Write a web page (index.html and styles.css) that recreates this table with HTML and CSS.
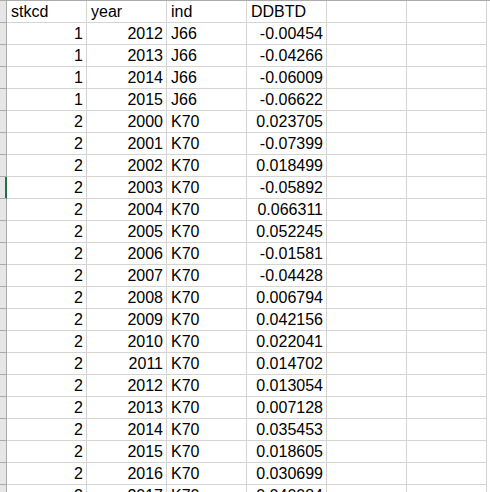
FILE: index.html
```html
<!DOCTYPE html>
<html>
<head>
<meta charset="utf-8">
<link rel="stylesheet" href="styles.css">
</head>
<body>
<div class="sheet">
  <div class="row"><div class="rh"></div><div class="c">stkcd</div><div class="c">year</div><div class="c">ind</div><div class="c">DDBTD</div><div class="c"></div><div class="c"></div></div>
  <div class="row"><div class="rh"></div><div class="c n">1</div><div class="c n">2012</div><div class="c">J66</div><div class="c n">-0.00454</div><div class="c"></div><div class="c"></div></div>
  <div class="row"><div class="rh"></div><div class="c n">1</div><div class="c n">2013</div><div class="c">J66</div><div class="c n">-0.04266</div><div class="c"></div><div class="c"></div></div>
  <div class="row"><div class="rh"></div><div class="c n">1</div><div class="c n">2014</div><div class="c">J66</div><div class="c n">-0.06009</div><div class="c"></div><div class="c"></div></div>
  <div class="row"><div class="rh"></div><div class="c n">1</div><div class="c n">2015</div><div class="c">J66</div><div class="c n">-0.06622</div><div class="c"></div><div class="c"></div></div>
  <div class="row"><div class="rh"></div><div class="c n">2</div><div class="c n">2000</div><div class="c">K70</div><div class="c n">0.023705</div><div class="c"></div><div class="c"></div></div>
  <div class="row"><div class="rh"></div><div class="c n">2</div><div class="c n">2001</div><div class="c">K70</div><div class="c n">-0.07399</div><div class="c"></div><div class="c"></div></div>
  <div class="row"><div class="rh"></div><div class="c n">2</div><div class="c n">2002</div><div class="c">K70</div><div class="c n">0.018499</div><div class="c"></div><div class="c"></div></div>
  <div class="row"><div class="rh sel"></div><div class="c n">2</div><div class="c n">2003</div><div class="c">K70</div><div class="c n">-0.05892</div><div class="c"></div><div class="c"></div></div>
  <div class="row"><div class="rh"></div><div class="c n">2</div><div class="c n">2004</div><div class="c">K70</div><div class="c n">0.066311</div><div class="c"></div><div class="c"></div></div>
  <div class="row"><div class="rh"></div><div class="c n">2</div><div class="c n">2005</div><div class="c">K70</div><div class="c n">0.052245</div><div class="c"></div><div class="c"></div></div>
  <div class="row"><div class="rh"></div><div class="c n">2</div><div class="c n">2006</div><div class="c">K70</div><div class="c n">-0.01581</div><div class="c"></div><div class="c"></div></div>
  <div class="row"><div class="rh"></div><div class="c n">2</div><div class="c n">2007</div><div class="c">K70</div><div class="c n">-0.04428</div><div class="c"></div><div class="c"></div></div>
  <div class="row"><div class="rh"></div><div class="c n">2</div><div class="c n">2008</div><div class="c">K70</div><div class="c n">0.006794</div><div class="c"></div><div class="c"></div></div>
  <div class="row"><div class="rh"></div><div class="c n">2</div><div class="c n">2009</div><div class="c">K70</div><div class="c n">0.042156</div><div class="c"></div><div class="c"></div></div>
  <div class="row"><div class="rh"></div><div class="c n">2</div><div class="c n">2010</div><div class="c">K70</div><div class="c n">0.022041</div><div class="c"></div><div class="c"></div></div>
  <div class="row"><div class="rh"></div><div class="c n">2</div><div class="c n">2011</div><div class="c">K70</div><div class="c n">0.014702</div><div class="c"></div><div class="c"></div></div>
  <div class="row"><div class="rh"></div><div class="c n">2</div><div class="c n">2012</div><div class="c">K70</div><div class="c n">0.013054</div><div class="c"></div><div class="c"></div></div>
  <div class="row"><div class="rh"></div><div class="c n">2</div><div class="c n">2013</div><div class="c">K70</div><div class="c n">0.007128</div><div class="c"></div><div class="c"></div></div>
  <div class="row"><div class="rh"></div><div class="c n">2</div><div class="c n">2014</div><div class="c">K70</div><div class="c n">0.035453</div><div class="c"></div><div class="c"></div></div>
  <div class="row"><div class="rh"></div><div class="c n">2</div><div class="c n">2015</div><div class="c">K70</div><div class="c n">0.018605</div><div class="c"></div><div class="c"></div></div>
  <div class="row"><div class="rh"></div><div class="c n">2</div><div class="c n">2016</div><div class="c">K70</div><div class="c n">0.030699</div><div class="c"></div><div class="c"></div></div>
  <div class="row"><div class="rh"></div><div class="c n">2</div><div class="c n">2017</div><div class="c">K70</div><div class="c n">0.040084</div><div class="c"></div><div class="c"></div></div>
</div>
</body>
</html>
```

FILE: styles.css
```css
html, body {
  margin: 0;
  padding: 0;
  background: #ffffff;
  overflow: hidden;
}
.sheet {
  width: 490px;
  height: 492px;
  overflow: hidden;
  border-top: 1px solid #ababab;
  font-family: "Liberation Sans", Arial, sans-serif;
  font-size: 16px;
  color: #000000;
}
.row {
  display: grid;
  grid-template-columns: 7px repeat(6, 80px);
  height: 22px;
}
.rh {
  background: #e6e6e6;
  border-right: 1px solid #ababab;
  border-bottom: 1px solid #ababab;
}
.rh.sel {
  background: linear-gradient(to right, #e6e6e6 0, #e6e6e6 5px, #217346 5px);
  border-right-color: #217346;
  border-bottom-color: #ababab;
}
.c {
  border-right: 1px solid #d4d4d4;
  border-bottom: 1px solid #d4d4d4;
  line-height: 21px;
  padding: 0 3px 0 4px;
  white-space: nowrap;
  overflow: hidden;
}
.n {
  text-align: right;
}
```
